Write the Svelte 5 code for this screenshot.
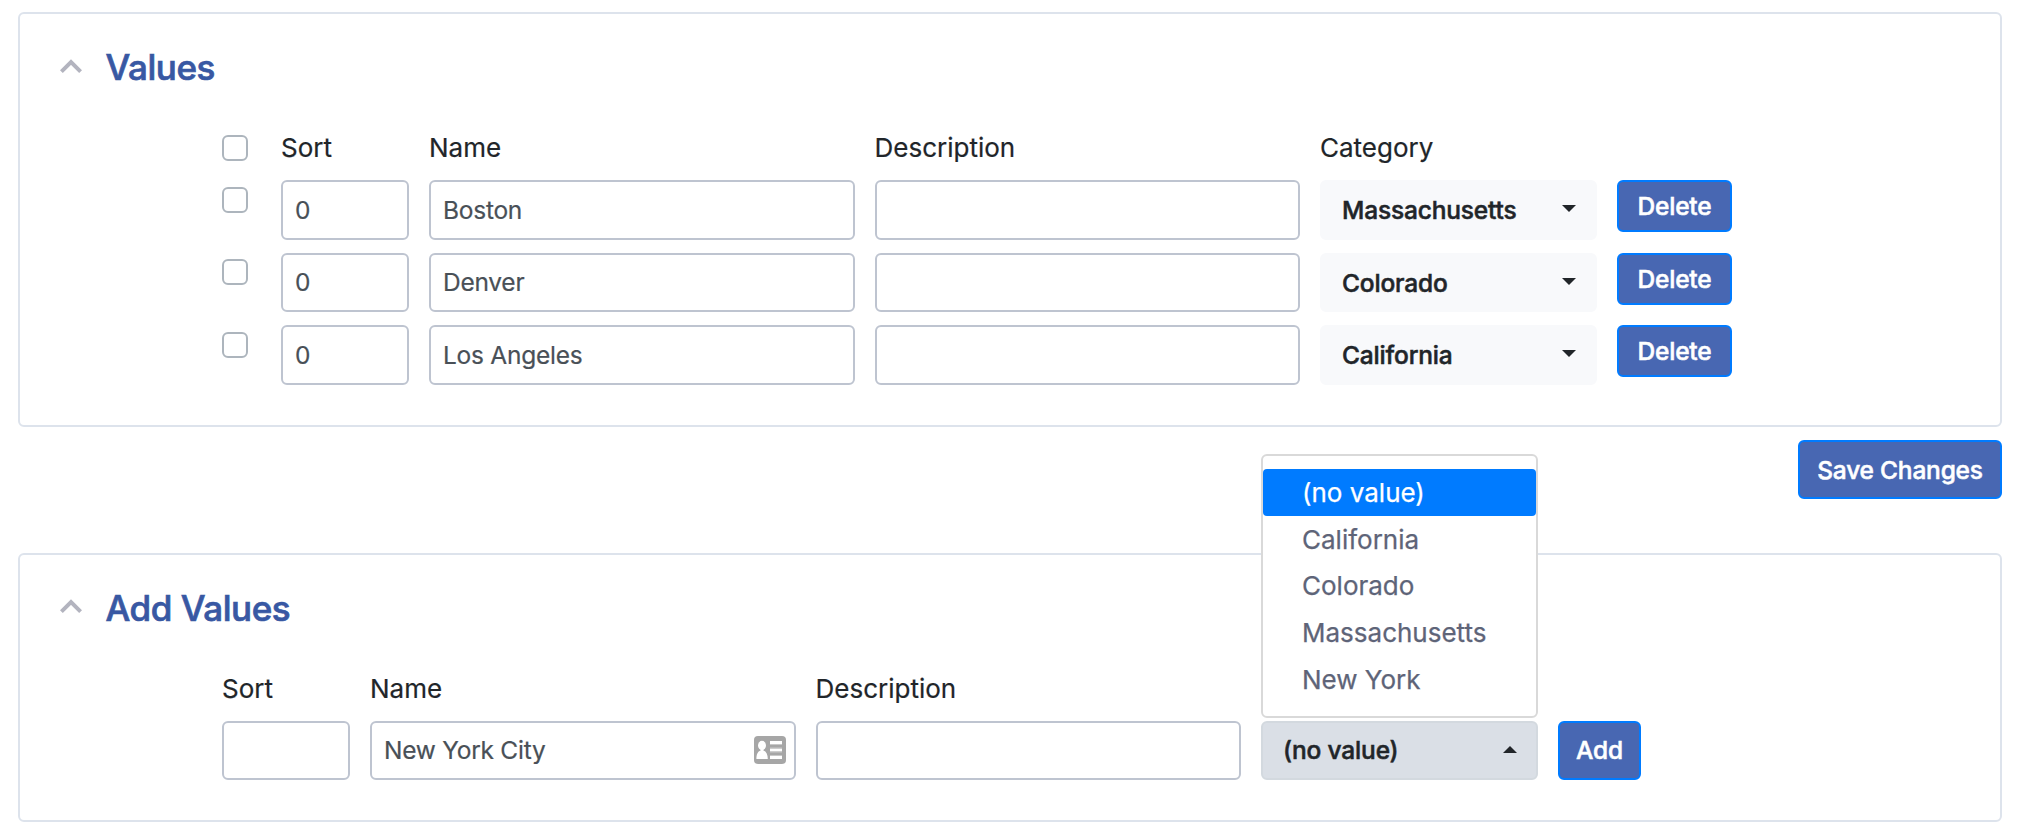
<script>
  let rows = $state([
    { sort: '0', name: 'Boston', description: '', category: 'Massachusetts' },
    { sort: '0', name: 'Denver', description: '', category: 'Colorado' },
    { sort: '0', name: 'Los Angeles', description: '', category: 'California' }
  ]);
  const options = ['(no value)', 'California', 'Colorado', 'Massachusetts', 'New York'];
  let selected = $state('(no value)');
  let open = $state(true);
  let draft = $state({ sort: '', name: 'New York City', description: '' });

  function choose(option) {
    selected = option;
    open = false;
  }
</script>

{#snippet heading(title)}
  <header>
    <svg class="chevron" viewBox="0 0 22 14" width="22" height="14">
      <path d="M1.4 12.6 L11 3 L20.6 12.6" fill="none" stroke="#b3b4bf" stroke-width="4" />
    </svg>
    <h2>{title}</h2>
  </header>
{/snippet}

<main>
  <section class="card values">
    {@render heading('Values')}
    <div class="grid labels">
      <input type="checkbox" class="check" />
      <span>Sort</span>
      <span>Name</span>
      <span>Description</span>
      <span>Category</span>
    </div>
    <div class="rows">
      {#each rows as row}
        <div class="grid">
          <input type="checkbox" class="check row-check" />
          <input class="field" bind:value={row.sort} />
          <input class="field" bind:value={row.name} />
          <input class="field" bind:value={row.description} />
          <button class="select">
            <span>{row.category}</span>
            <i class="caret"></i>
          </button>
          <button class="btn delete">Delete</button>
        </div>
      {/each}
    </div>
  </section>

  <div class="actions">
    <button class="btn save">Save Changes</button>
  </div>

  <section class="card add">
    {@render heading('Add Values')}
    <div class="grid labels">
      <span>Sort</span>
      <span>Name</span>
      <span>Description</span>
    </div>
    <div class="grid">
      <input class="field" bind:value={draft.sort} />
      <div class="with-icon">
        <input class="field" bind:value={draft.name} />
        <svg class="contact" viewBox="0 0 32 28" width="32" height="28">
          <rect width="32" height="28" rx="4" fill="#a6a6a6" />
          <ellipse cx="8" cy="9.4" rx="4" ry="4.6" fill="#fff" />
          <path d="M6.6 12h2.8v2.4c3 1 4.4 4 4.4 8.6H2.4c0-4.600 1.200-7.600 4.200-8.600z" fill="#fff" />
          <path d="M16 5h12v3H16zM16 12.500h12v3H16zM16 20h12v3H16z" fill="#fff" />
          <path d="M16 8h12v1H16zM16 11.500h12v1H16zM16 15.500h12v1H16zM16 19h12v1H16z" fill="#c8c8c8" />
        </svg>
      </div>
      <input class="field" bind:value={draft.description} />
      <div class="dropdown">
        <button class="select open" onclick={() => (open = !open)}>
          <span>{selected}</span>
          <i class="caret up"></i>
        </button>
        {#if open}
          <ul class="menu">
            {#each options as option}
              <li class:active={option === selected}>
                <button onclick={() => choose(option)}>{option}</button>
              </li>
            {/each}
          </ul>
        {/if}
      </div>
      <button class="btn add-btn">Add</button>
    </div>
  </section>
</main>

<style>
  :global(body) {
    background: #fff;
  }
  main,
  main * {
    box-sizing: border-box;
  }
  main {
    padding: 12px 26px 16px 18px;
    font-family: Inter, 'Liberation Sans', sans-serif;
    color: #212529;
  }
  button,
  input {
    font-family: inherit;
    margin: 0;
  }
  .card {
    border: 2px solid #dde3ec;
    border-radius: 6px;
    background: #fff;
  }
  .values {
    height: 415px;
  }
  .add {
    height: 269px;
  }
  header {
    display: flex;
    align-items: center;
    gap: 23.5px;
    height: 50px;
    margin: 28px 0 0 40px;
  }
  .chevron {
    margin-bottom: 2px;
  }
  .add .chevron {
    margin-bottom: 4px;
  }
  h2 {
    margin: 0;
    font-size: 35px;
    line-height: 50px;
    font-weight: 500;
    letter-spacing: -0.45px;
    -webkit-text-stroke: 0.7px currentColor;
    color: #3858a3;
  }
  .grid {
    display: grid;
    column-gap: 20px;
    align-items: start;
    padding-left: 202px;
  }
  .values .grid {
    grid-template-columns: 39px 128px 425.5px 425.5px 277px 115px;
  }
  .add .grid {
    grid-template-columns: 128px 425.5px 425.5px 277px 83px;
  }
  .labels {
    margin-top: 36px;
    height: 52px;
    font-size: 26px;
    line-height: 40px;
    -webkit-text-stroke: 0.2px currentColor;
  }
  .labels .check {
    margin-top: 7px;
  }
  .rows {
    display: grid;
    gap: 13px;
  }
  .check {
    appearance: none;
    width: 26px;
    height: 26px;
    border: 2px solid #adb5bd;
    border-radius: 6px;
    background: #fff;
  }
  .row-check {
    margin-top: 6.8px;
  }
  .field {
    width: 100%;
    height: 59.5px;
    padding: 0 12px;
    border: 2px solid #bec4d0;
    border-radius: 6px;
    background: #fff;
    color: #495057;
    font-size: 24.5px;
    letter-spacing: -0.25px;
    -webkit-text-stroke: 0.2px currentColor;
    outline: none;
  }
  .add .field,
  .add .select {
    height: 59px;
    padding-bottom: 1px;
  }
  .with-icon {
    position: relative;
  }
  .with-icon .field {
    display: block;
  }
  .contact {
    position: absolute;
    right: 10px;
    top: 15px;
  }
  .select {
    display: flex;
    align-items: center;
    justify-content: space-between;
    width: 100%;
    height: 59.5px;
    padding: 0.5px 19px 0 20px;
    border: 2px solid #f8f9fb;
    border-radius: 6px;
    background: #f8f9fb;
    color: #212529;
    font-size: 24.5px;
    font-weight: 500;
    letter-spacing: -0.17px;
    -webkit-text-stroke: 0.5px currentColor;
  }
  .select.open {
    border-color: #d3d9df;
    background: #dadfe6;
  }
  .caret {
    border: 7px solid transparent;
    border-top-color: #212529;
    border-bottom: 0;
    margin-bottom: 3px;
  }
  .caret.up {
    border-top: 0;
    border-bottom: 7px solid #212529;
    margin-bottom: 2px;
  }
  .btn {
    padding: 0;
    border: 2px solid #007bff;
    border-radius: 6px;
    background: #4867b2;
    color: #fff;
    font-size: 24.5px;
    font-weight: 500;
    letter-spacing: -0.2px;
    -webkit-text-stroke: 0.5px currentColor;
  }
  .delete {
    width: 115px;
    height: 52px;
  }
  .actions {
    display: flex;
    justify-content: flex-end;
    margin: 13px 0 54px;
  }
  .save {
    width: 204px;
    height: 59px;
  }
  .add-btn {
    width: 83px;
    height: 59px;
    padding-bottom: 1px;
  }
  .dropdown {
    position: relative;
  }
  .menu {
    position: absolute;
    left: 0;
    bottom: 62px;
    width: 277px;
    height: 264px;
    margin: 0;
    padding: 13px 0 0;
    list-style: none;
    background: #fff;
    border: 2px solid #d9d9d9;
    border-radius: 6px;
  }
  .menu button {
    display: block;
    width: 100%;
    height: 46.75px;
    padding: 0 0 0 39px;
    border: 0;
    background: none;
    text-align: left;
    font-size: 26px;
    -webkit-text-stroke: 0.25px currentColor;
    color: #5e6478;
  }
  .menu .active button {
    background: #007bff;
    color: #fff;
    border-radius: 4px;
  }
</style>
